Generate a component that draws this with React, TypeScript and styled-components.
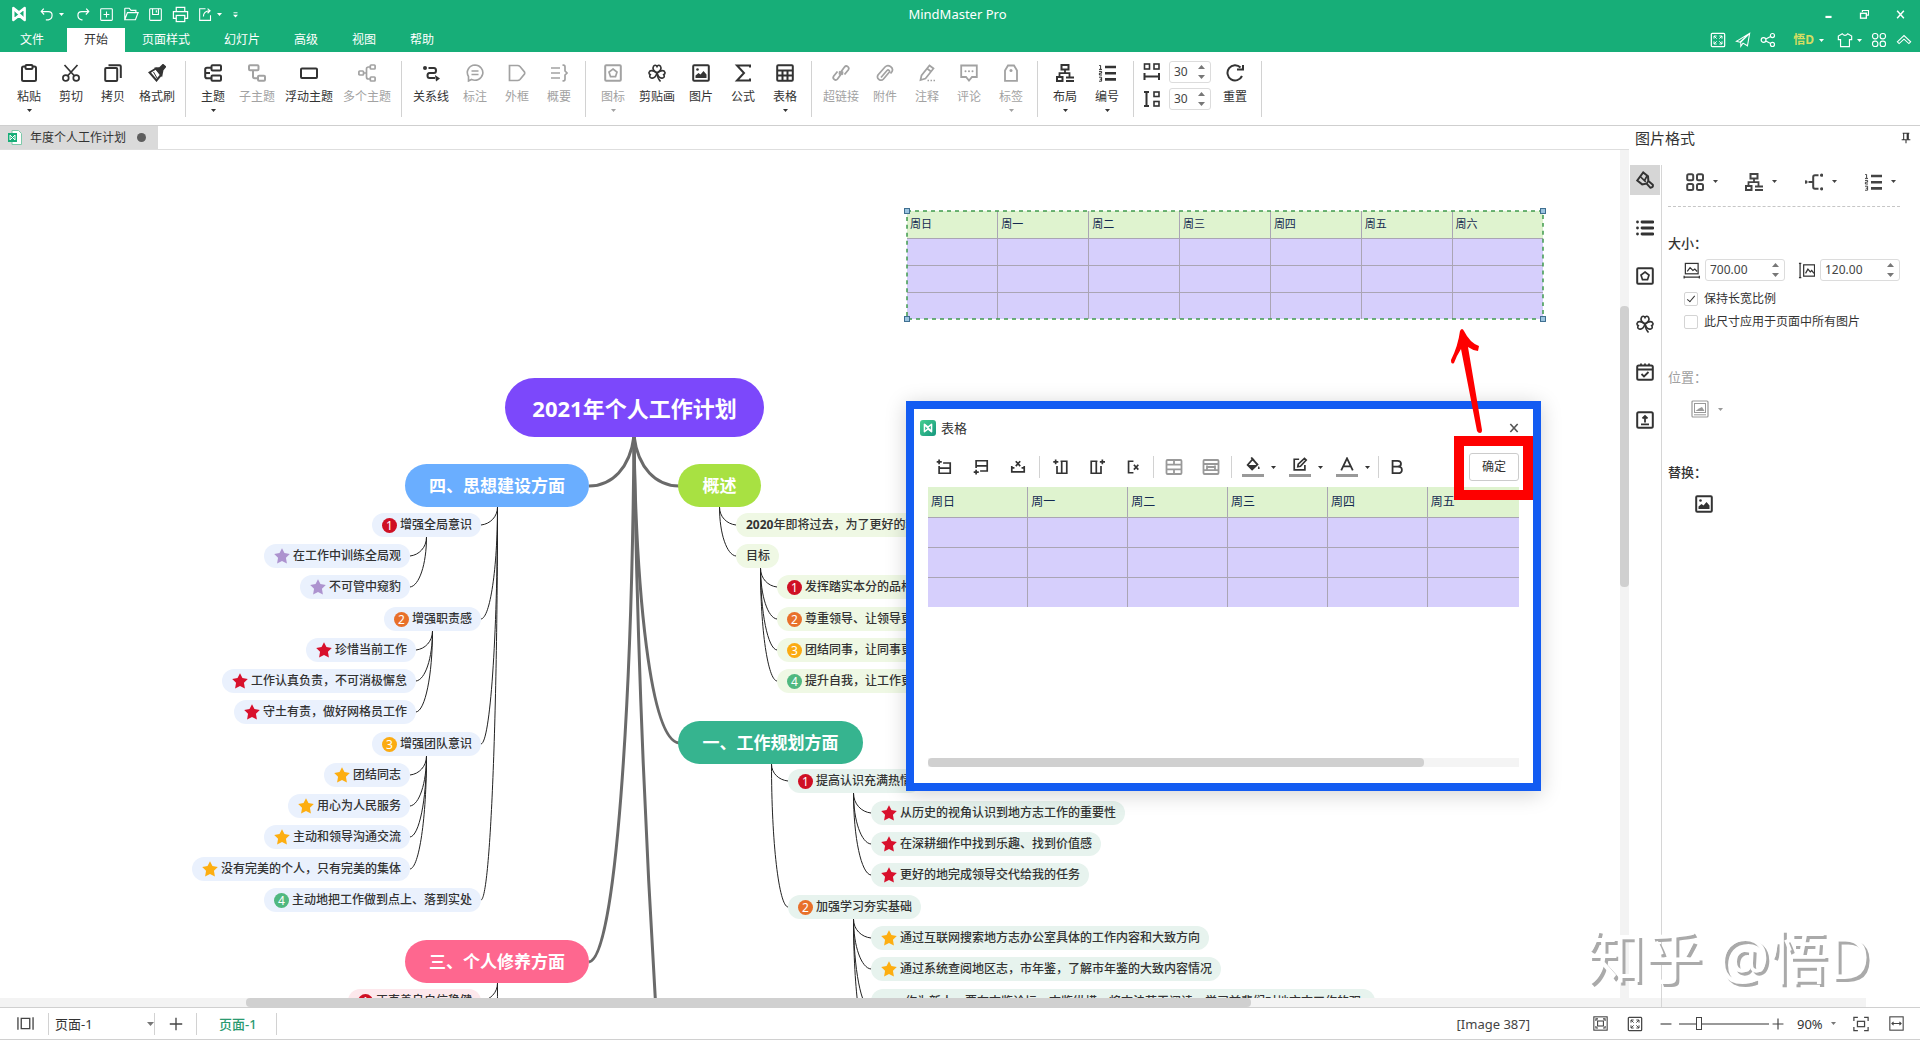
import React from "react";
import styled, { createGlobalStyle, css } from "styled-components";

/* ---------- icon drawings, 18 x 18 grid ---------- */

const dot = (x: number, y: number, r = 1.3) => <circle cx={x} cy={y} r={r} fill="currentColor" stroke="none" />;

const ICONS: Record<string, React.ReactNode> = {
  paste: <><rect x="2" y="2.5" width="14" height="14.5" rx="1.5" /><rect x="5.5" y="1" width="7" height="4" rx="1" fill="#fff" /></>,
  cut: <g strokeWidth="1.7"><circle cx="3.8" cy="14" r="2.9" /><circle cx="14.2" cy="14" r="2.9" /><path d="M2.5 1 12.5 12M15.5 1 5.5 12" /></g>,
  copy: <><rect x="1.2" y="4" width="12" height="13" rx="1" /><path d="M4.5 1.2H15.5Q16.8 1.2 16.8 2.5V14" /></>,
  brush: <><path d="M1.5 8.5 8 4.5 13 11 8.5 16.5Z" /><path d="M8 4.5 12 4 15 1 17 2.8 14.5 6 13.5 11Z" fill="currentColor" /><path d="M5.5 8 9 14" strokeWidth="1" /></>,
  theme: <><rect x="7.5" y="1.2" width="9.5" height="5.3" rx="1" /><rect x="7.5" y="11.5" width="9.5" height="5.3" rx="1" /><path d="M7.5 3.8H3Q1.2 3.8 1.2 5.6V12.4Q1.2 14.2 3 14.2H7.5M1.2 9H6" /></>,
  subtheme: <><rect x="1" y="1.2" width="9.5" height="5" rx="1" /><rect x="10" y="11.8" width="7" height="5" rx="1" /><path d="M5 6.2V12.5Q5 14.2 6.7 14.2H10" /></>,
  floating: <rect x="1" y="4.5" width="16" height="9.5" rx="1" />,
  multi: <g strokeWidth="1.7"><rect x="0.9" y="7" width="4.6" height="4" rx="0.8" /><rect x="12.3" y="1" width="4.8" height="4" rx="0.8" /><rect x="12.3" y="13" width="4.8" height="4" rx="0.8" /><path d="M12 3H10.5Q8.5 3 8.5 5V13Q8.5 15 10.5 15H12M5.5 9H8.5" /></g>,
  relation: <>{dot(3, 4, 2)}<path d="M6.5 4H12Q14 4 14 6.5T12 9H7.5Q5.5 9 5.5 11.5T7.5 14H13" /><path d="M13 11 18 14.5 14 17.5Z" fill="currentColor" stroke="none" /></>,
  callout: <g strokeWidth="1.6"><path d="M9 1A8 7.6 0 1 1 5.5 15.5L2.5 17V12.5A8 7.6 0 0 1 9 1Z" /><path d="M5.5 7H12.5M5.5 10.5H12.5" /></g>,
  frame: <path d="M1.5 1.5H9.5Q11 1.5 12 2.5L16.5 8Q17 9 16.5 10L12 15.5Q11 16.5 9.5 16.5H1.5Z" strokeWidth="1.7" />,
  summary: <g strokeWidth="1.7"><path d="M1 4H10M1 9H10M1 14H10M12.5 1.2H13.5Q15 1.2 15 3V7L17 9 15 11V15Q15 16.8 13.5 16.8H12.5" /></g>,
  picon: <><rect x="1.2" y="1.2" width="15.6" height="15.6" rx="1" /><path d="M9 5 13 8 11.5 12.7H6.5L5 8Z" strokeWidth="1.7" /></>,
  clover: <g strokeWidth="1.6"><path d="M9 9Q3.5 5.5 5.5 2.3 7.5 0 9 2.6 10.5 0 12.5 2.3 14.5 5.5 9 9Z" /><path d="M9 9Q2.5 4.5 1 8.5 0.8 10 2.3 10.6 0.8 13 3.3 14 7 15 9 9Z" /><path d="M9 9Q15.5 4.5 17 8.5 17.2 10 15.7 10.6 17.2 13 14.7 14 11 15 9 9Z" /><path d="M9 9Q9.5 14.5 12.5 17.5" /></g>,
  image: <><rect x="1.2" y="1.2" width="15.6" height="15.6" rx="1" />{dot(5.5, 5.5)}<path d="M3.5 14V11.5L6.5 9 8.5 10.5 11.5 7 14.5 10.5V14Z" fill="currentColor" stroke="none" /></>,
  sigma: <path d="M16 3.5V1.5H3L10 9 3 16.5H16V14.5" />,
  table: <><rect x="1.2" y="1.2" width="15.6" height="15.6" rx="1" /><path d="M1.2 6.5H16.8M1.2 11.5H16.8M6.5 6.5V16.8M11.5 6.5V16.8" /></>,
  link: <g strokeWidth="1.8"><path d="M7 10.5 12.5 3Q14 1.2 15.8 2.6T16.2 6L12.5 10.5" /><path d="M11 7.5 5.5 15Q4 16.8 2.2 15.4T1.8 12L5.5 7.5" /><path d="M7 7.5 11 10.5" /></g>,
  clip: <path d="M5 13.5 11 6.5Q12 5.5 13 6.3T13.2 8.2L7.5 15Q5.5 17.2 3 15.5T2 11L9 3Q11.5 0.5 14.5 2.5T16 7.5L14.5 9.5" strokeWidth="1.7" />,
  note: <g strokeWidth="1.7"><path d="M2.5 16 3.5 11.5 11.5 1.5 15.5 4.5 7.5 14.5Z" /><path d="M9 4.5 13 7.5" /><path d="M9.5 16.5H11M12.5 16.5H14M15.5 16.5H17" /></g>,
  comment: <><path d="M1.2 1.5H16.8V13H12L9 16.5 6 13H1.2Z" strokeWidth="1.8" />{dot(5.5, 7.3, 1)}{dot(9, 7.3, 1)}{dot(12.5, 7.3, 1)}</>,
  tag: <><path d="M3 16.8V6.5L6 1.5H12L15 6.5V16.8Z" strokeWidth="1.8" />{dot(9, 6.5, 1.5)}</>,
  layout: <><rect x="5.5" y="1" width="7" height="4.5" /><rect x="1" y="13" width="5.5" height="4" /><path d="M9 5.5V9M3.5 13V9.2H13.5V12.5M10 13.5H18M10 17H18" strokeWidth="1.8" /></>,
  numbering: <><path d="M1.2 1.5H2.6V5M1 5.4H4M1 7.4H3.6V9.2H1.4V11H4M1 13.2H3.6V17.2H1M1.8 15.2H3.6" strokeWidth="1" /><path d="M7 3H18M7 9.2H18M7 15.4H18" strokeWidth="2.6" /></>,
  hgap: <g strokeWidth="1.6"><rect x="1.5" y="1" width="5" height="5" /><rect x="11" y="1" width="5" height="5" /><path d="M1.5 10V17M16 10V17M1.5 13.5H16" strokeWidth="2" /></g>,
  vgap: <g strokeWidth="1.6"><path d="M1 2H6M1 16H6M3.5 2V16" strokeWidth="2" /><rect x="11" y="2" width="5" height="4.5" /><rect x="11" y="11.5" width="5" height="4.5" /></g>,
  reset: <><path d="M14.5 3.5A7.6 7.6 0 1 0 16 12" /><path d="M11 5.5H17V1" /></>,

  undo: <path d="M4.5 2 1.5 5.5 5 9M1.5 5.5H10Q14.5 5.5 14.5 10T10 15.5H7" strokeWidth="1.4" />,
  redo: <path d="M13.5 2 16.5 5.5 13 9M16.5 5.5H8Q3.5 5.5 3.5 10T8 15.5H9" strokeWidth="1.4" />,
  plusbox: <g strokeWidth="1.3"><rect x="2" y="2" width="14" height="14" rx="1" /><path d="M9 5.5V12.5M5.5 9H12.5" /></g>,
  open: <path d="M2 15.5V3Q2 2.5 2.5 2.5H7L9 5H14.5V7.5M2 15.5 5 7.5H17L14 15.5Z" strokeWidth="1.3" />,
  save: <g strokeWidth="1.3"><rect x="2" y="2" width="14" height="14" rx="1" /><path d="M5.5 2V9H12.5V2M10 4V6.5" /></g>,
  print: <g strokeWidth="1.3"><path d="M4.5 6V1.5H13.5V6M4.5 13H1.5V6H16.5V13H13.5" /><rect x="4.5" y="10" width="9" height="6.5" /></g>,
  share: <g strokeWidth="1.3"><path d="M9 2H2V16H15V10" /><path d="M6.5 11.5Q6.5 5 14 4.5M11.5 2 14.5 4.5 11.5 7.5" /></g>,
  more: <><path d="M5 5.5H13" strokeWidth="1.8" /><path d="M4 9.5H14L9 15Z" fill="currentColor" stroke="none" /></>,
  full: <g strokeWidth="1.4"><rect x="1.5" y="1.5" width="15" height="15" rx="1" /><path d="M4.5 7.5V4.5H7.5M4.5 4.5 7.5 7.5M10.5 4.5H13.5V7.5M13.5 4.5 10.5 7.5M4.5 10.5V13.5H7.5M4.5 13.5 7.5 10.5M13.5 10.5V13.5H10.5M13.5 13.5 10.5 10.5" strokeWidth="1.1" /></g>,
  plane: <path d="M1.5 10.5 16.5 1.5 14 15.5 9 12.5 6.5 16V11.5L16.5 1.5 5.5 11.5Z" strokeWidth="1.2" />,
  nodes: <g strokeWidth="1.3"><circle cx="4" cy="9" r="2.7" /><circle cx="14" cy="4" r="2.3" /><circle cx="14" cy="14" r="2.3" /><path d="M6.5 8 12 5M6.5 10 12 13" /></g>,
  shirt: <path d="M6 2 1.5 4.5V8.5H4V16.5H14V8.5H16.5V4.5L12 2Q9 5.5 6 2Z" strokeWidth="1.3" />,
  apps: <g strokeWidth="1.3"><rect x="1.7" y="1.7" width="6" height="6" rx="2.6" /><rect x="10.3" y="1.7" width="6" height="6" rx="2.6" /><rect x="1.7" y="10.3" width="6" height="6" rx="2.6" /><rect x="10.3" y="10.3" width="6" height="6" rx="2.6" /></g>,
  chevrons: <path d="M1.5 11 9 4 16.5 11 14.5 13 9 8 3.5 13Z" strokeWidth="1.2" />,
  minimise: <path d="M4 13H14" strokeWidth="3.6" />,
  restore: <><path d="M5.5 5V2.5H15.5V10H13" strokeWidth="1.8" /><rect x="2.5" y="7" width="9.5" height="8" strokeWidth="2.2" /></>,
  close: <path d="M3.5 3 14.5 15M14.5 3 3.5 15" strokeWidth="2.4" />,

  format: <><path d="M1.2 9.5 7.2 1.5 12 5.2 12.4 10 16.8 13.8Q17.4 16.6 14.4 16.8L10.6 12.6 6.2 13.4Z" /><path d="M4.2 5.5 9.8 10.8M12.4 10 10.6 12.6M8.5 9.5 11 5" strokeWidth="1.6" /></>,
  list: <>{dot(1.5, 3, 1.4)}{dot(1.5, 9, 1.4)}{dot(1.5, 15, 1.4)}<path d="M6 3H17M6 9H17M6 15H17" strokeWidth="2.8" strokeLinecap="round" /></>,
  calendar: <><rect x="1.2" y="2.5" width="15.6" height="14.3" rx="1.5" /><path d="M1.2 6.5H16.8M5 0.5V3M9 0.5V3M13 0.5V3M5.500 11 8 13.5 12.5 9" strokeWidth="1.8" /></>,
  upload: <><rect x="1.2" y="1.2" width="15.6" height="15.6" rx="1.5" /><path d="M5 13.3H13M9 11.5V6M6.5 7.5 9 5 11.5 7.5" strokeWidth="1.8" /></>,
  squares: <><rect x="1.2" y="1.2" width="6" height="6" rx="1.5" /><rect x="11" y="1.2" width="6" height="6" rx="1.5" /><rect x="1.2" y="11" width="6" height="6" rx="1.5" /><rect x="11" y="11" width="6" height="6" rx="1.5" /></>,
  branch: <>{dot(0.9, 9, 1.7)}{dot(16.6, 2.2, 1.6)}{dot(16.6, 15.8, 1.6)}<path d="M3.5 9H8M13.5 2.2H10Q8.2 2.2 8.2 4V14Q8.2 15.8 10 15.8H13.5" /></>,
  pin: <><path d="M4 2H14M5.5 2V11M12 2V11M2.5 11.5H15.5M9 12V17" strokeWidth="1.6" /><path d="M10 2H13V11H10Z" fill="currentColor" stroke="none" /></>,
  imgWidth: <g strokeWidth="1.3"><rect x="2.5" y="1.5" width="13.5" height="11" /><path d="M4.5 10 7.5 6 10.5 9 12.500 7.5 15 10M1 16H17.5M1.2 14.5V17.5M17.3 14.5V17.5" /></g>,
  imgHeight: <g strokeWidth="1.3"><rect x="6" y="3" width="11.5" height="12" /><path d="M8 12 10.5 7.5 13 10.5 14.5 9 17 12M2.2 1.5V16.5M1 1.5H3.5M1 16.5H3.5" /></g>,
  imgFrame: <><rect x="1" y="1" width="16" height="16" rx="1" strokeWidth="1.2" /><rect x="3.5" y="3.5" width="11" height="9" strokeWidth="1" /><path d="M4.5 11 8 8.5 11 7 13.5 11Z" fill="currentColor" stroke="none" /><path d="M3 14.8H15" strokeWidth="1" /></>,

  rowAbove: <path d="M3.5 0.5V6M0.8 3.2H6.5M8 4.5H16V16H3.5V8M3.5 10.2H16" strokeWidth="1.9" />,
  rowBelow: <path d="M3.5 12V17.5M0.8 14.8H6.5M8 13.5H16V2H3.5V10M3.5 7.8H16" strokeWidth="1.9" />,
  rowDelete: <path d="M2 8V14.5H16V8M6.5 2.5 11.5 8M11.5 2.5 6.5 8M5 10H2M13 10H16" strokeWidth="1.9" />,
  colLeft: <path d="M3 0.5V6M0.3 3.2H6M4.5 8V16H15.5V2.5H8.5M9.8 2.5V16" strokeWidth="1.9" />,
  colRight: <path d="M15 0.5V6M12.2 3.2H18M13.5 8V16H2.5V2.5H9.5M8.2 2.5V16" strokeWidth="1.9" />,
  colDelete: <path d="M9.5 2.5H4V15.5H9.5M10 6.5 15 12M15 6.5 10 12" strokeWidth="1.9" />,
  merge: <g strokeWidth="1.8"><rect x="1.5" y="2" width="15" height="14" rx="1" /><path d="M1.5 6.7H16.5M1.5 11.3H16.5M9 2V6.7M9 11.3V16" /></g>,
  split: <g strokeWidth="1.8"><rect x="1.5" y="2" width="15" height="14" rx="1" /><path d="M1.5 6H16.500M5 7.500V12M13 7.5V12M1.5 12.2H16.5M5 9H13" /></g>,
  fill: <><path d="M8.500 2.5 14 8.5 8 14 3 9Z" /><path d="M3.5 9H13.5L8 14Z" fill="currentColor" stroke="none" /><path d="M7 0.5 10 4" /><path d="M15.5 10Q17.5 13.5 15.5 13.5T15.5 10Z" fill="currentColor" stroke="none" /></>,
  pen: <path d="M8 2.5H2.5V14.5H14.5V9M6.5 11 7 8 14 1.5 16 3.5 9.5 10.5Z" strokeWidth="1.9" />,
  letterA: <path d="M2.5 15 9 1.5 15.5 15M5 10.5H13" />,
  letterB: <path d="M4 2H9.5Q13.5 2 13.5 5.3T9.5 8.7H4ZM4 8.7H10Q14.5 8.7 14.5 12.3T10 16H4Z" />,

  panels: <path d="M1 2.5V15.5M17 2.5V15.5M4.5 3.5H13.5V14.5H4.5Z" strokeWidth="1.4" />,
  plus: <path d="M9 2V16M2 9H16" strokeWidth="1.5" />,
  minus: <path d="M2 9H16" strokeWidth="1.5" />,
  fit: <g strokeWidth="1.3"><rect x="1" y="1" width="16" height="16" /><rect x="5.5" y="6" width="7" height="6" /><path d="M3.5 6V3.5H6M12 3.5H14.5V6M3.5 12V14.5H6M12 14.5H14.5V12" /></g>,
  focus: <g strokeWidth="1.4"><rect x="5" y="6" width="8" height="6" /><path d="M1 5.5V1.5H5.5M12.5 1.5H17V5.5M1 12.5V16.5H5.5M12.5 16.5H17V12.5" /></g>,
  fitWidth: <g strokeWidth="1.3"><rect x="1" y="1" width="16" height="16" /><path d="M4 9H14M5.5 7 3.5 9 5.5 11M12.5 7 14.5 9 12.5 11" /></g>,
};

const Svg = styled.svg`
  display: block;
  flex: none;
`;

function Icon({ name, size = 18 }: { name: string; size?: number }) {
  return (
    <Svg width={size} height={size} viewBox="0 0 18 18" fill="none" stroke="currentColor" strokeWidth="2" aria-hidden="true">
      {ICONS[name]}
    </Svg>
  );
}

function Caret({ up = false, large = false }: { up?: boolean; large?: boolean }) {
  return (
    <Svg width={large ? 7 : 5} height={large ? 4 : 3} viewBox="0 0 7 4" preserveAspectRatio="none" aria-hidden="true">
      <path d={up ? "M0 4H7L3.5 0Z" : "M0 0H7L3.5 4Z"} fill="currentColor" />
    </Svg>
  );
}

function Logo({ size = 16 }: { size?: number }) {
  return (
    <Svg width={size} height={size} viewBox="0 0 16 16" aria-hidden="true">
      <path d="M2.3 2V14L8 9.5 13.7 14V2L8 6.5Z" fill="none" stroke="currentColor" strokeWidth="2.4" strokeLinejoin="round" />
      <path d="M2.5 3 13.5 13" stroke="currentColor" strokeWidth="2.2" />
    </Svg>
  );
}

/* ---------- base ---------- */

const Global = createGlobalStyle`
  *, *::before, *::after { box-sizing: border-box; }
  body { margin: 0; }
  body, button, input, select {
    font-family: "Noto Sans", "Noto Sans CJK SC", sans-serif;
    font-size: 12px;
    line-height: 16px;
    color: #333;
  }
`;

const Page = styled.div`
  position: relative;
  display: flex;
  flex-direction: column;
  height: 100vh;
  background: #fff;
  overflow: hidden;
`;

const plain = css`
  display: flex;
  align-items: center;
  padding: 0;
  border: 0;
  background: none;
`;

const IconButton = styled.button<{ $w?: number; $gap?: number; $muted?: boolean }>`
  ${plain}
  flex: none;
  justify-content: center;
  gap: ${(p) => p.$gap ?? 4}px;
  width: ${(p) => (p.$w ? `${p.$w}px` : "auto")};
  color: ${(p) => (p.$muted ? "#999" : "inherit")};
`;

const Cluster = styled.div<{ $gap?: number }>`
  display: flex;
  align-items: center;
  gap: ${(p) => p.$gap ?? 0}px;
`;

const Divider = styled.span<{ $m?: number }>`
  flex: none;
  width: 1px;
  height: 22px;
  margin: 0 ${(p) => p.$m ?? 0}px;
  background: #d2d2d2;
`;

/* ---------- header ---------- */

const Header = styled.header`
  flex: none;
  color: #fff;
  background: #17ae78;
`;

const TitleBar = styled.div`
  display: grid;
  grid-template-columns: 1fr auto 1fr;
  align-items: center;
  height: 28px;
  padding: 0 14px 0 9px;
`;

const QuickBar = styled.div`
  display: flex;
  align-items: center;
  gap: 9px;
`;

const AppTitle = styled.h1`
  margin: 0;
  font-size: 13px;
  line-height: 16px;
  font-weight: 400;
`;

const WindowControls = styled.div`
  display: flex;
  justify-content: flex-end;
  gap: 25px;
  height: 18px;
`;

const MenuRow = styled.div`
  display: flex;
  justify-content: space-between;
  height: 24px;
  padding: 0 8px 0 3px;
`;

const Menu = styled.nav`
  display: flex;
`;

const MenuTab = styled.button<{ $active?: boolean; $file?: boolean }>`
  ${plain}
  padding: 0 17px;
  margin-right: ${(p) => (p.$file ? "6px" : "0")};
  color: ${(p) => (p.$active ? "#333" : "#fff")};
  background: ${(p) => (p.$active ? "#fff" : "none")};
`;

const HeaderTools = styled.div`
  display: flex;
  align-items: center;
  gap: 9px;
`;

const User = styled.button`
  ${plain}
  gap: 5px;
  margin: 0 4px 0 8px;
  color: #fff;
`;

const UserName = styled.span`
  font-weight: 700;
  color: #d6dd62;
`;

/* ---------- ribbon ---------- */

const Ribbon = styled.section`
  flex: none;
  display: flex;
  height: 74px;
  padding: 9px 2px 8px;
  border-bottom: 1px solid #cfcfcf;
`;

const Group = styled.div`
  display: flex;
  padding: 0 5px 0 6px;
  border-right: 1px solid #d2d2d2;
`;

const Tool = styled.button<{ $chars: number; $off?: boolean }>`
  ${plain}
  flex-direction: column;
  width: ${(p) => (p.$chars === 4 ? 58 : p.$chars === 3 ? 46 : 42)}px;
  padding-top: 3px;
  white-space: nowrap;
  color: ${(p) => (p.$off ? "#a2a2a2" : "#333")};
`;

const ToolLabel = styled.span`
  margin: 7px 0 4px;
`;

const Spacing = styled.div`
  display: flex;
  flex-direction: column;
  gap: 5px;
  padding: 0 3px;
`;

const Field = styled.div`
  display: flex;
  align-items: center;
  gap: 8px;
`;

const Spinner = styled.span<{ $w: number }>`
  display: flex;
  align-items: center;
  width: ${(p) => p.$w}px;
  height: 22px;
  padding: 0 5px 0 4px;
  border: 1px solid #dcdcdc;
  border-radius: 3px;
`;

const SpinnerInput = styled.input`
  flex: 1;
  min-width: 0;
  width: 0;
  padding: 0;
  border: 0;
  outline: 0;
  background: none;
  color: #444;
`;

const Steps = styled.span`
  display: flex;
  flex-direction: column;
  gap: 6px;
  color: #777;
`;

const Step = styled.button`
  ${plain}
  color: inherit;
`;

function NumberBox({ value, w, label }: { value: string; w: number; label: string }) {
  return (
    <Spinner $w={w}>
      <SpinnerInput type="text" defaultValue={value} aria-label={label} />
      <Steps>
        <Step type="button" aria-label={`${label} +`}><Caret up large /></Step>
        <Step type="button" aria-label={`${label} -`}><Caret large /></Step>
      </Steps>
    </Spinner>
  );
}

type ToolDef = { icon: string; label: string; off?: boolean; menu?: boolean };

const RIBBON: ToolDef[][] = [
  [
    { icon: "paste", label: "粘贴", menu: true },
    { icon: "cut", label: "剪切" },
    { icon: "copy", label: "拷贝" },
    { icon: "brush", label: "格式刷" },
  ],
  [
    { icon: "theme", label: "主题", menu: true },
    { icon: "subtheme", label: "子主题", off: true },
    { icon: "floating", label: "浮动主题" },
    { icon: "multi", label: "多个主题", off: true },
  ],
  [
    { icon: "relation", label: "关系线" },
    { icon: "callout", label: "标注", off: true },
    { icon: "frame", label: "外框", off: true },
    { icon: "summary", label: "概要", off: true },
  ],
  [
    { icon: "picon", label: "图标", off: true, menu: true },
    { icon: "clover", label: "剪贴画" },
    { icon: "image", label: "图片" },
    { icon: "sigma", label: "公式" },
    { icon: "table", label: "表格", menu: true },
  ],
  [
    { icon: "link", label: "超链接", off: true },
    { icon: "clip", label: "附件", off: true },
    { icon: "note", label: "注释", off: true },
    { icon: "comment", label: "评论", off: true },
    { icon: "tag", label: "标签", off: true, menu: true },
  ],
  [
    { icon: "layout", label: "布局", menu: true },
    { icon: "numbering", label: "编号", menu: true },
  ],
];

function ToolButton({ icon, label, off, menu }: ToolDef) {
  return (
    <Tool type="button" $chars={label.length} $off={off}>
      <Icon name={icon} />
      <ToolLabel>{label}</ToolLabel>
      {menu && <Caret />}
    </Tool>
  );
}

/* ---------- workspace ---------- */

const Main = styled.main`
  flex: 1;
  min-height: 0;
  display: grid;
  grid-template-columns: minmax(0, 1fr) 291px;
`;

const Workspace = styled.section`
  display: grid;
  grid-template: 24px minmax(0, 1fr) 9px / minmax(0, 1fr) 9px;
`;

const DocTabs = styled.div`
  grid-column: 1 / -1;
  display: flex;
  border-bottom: 1px solid #dedede;
`;

const DocTab = styled.button`
  ${plain}
  gap: 8px;
  padding: 0 12px 0 8px;
  background: #dadada;
`;

const Modified = styled.span`
  width: 9px;
  height: 9px;
  margin-left: 3px;
  border-radius: 50%;
  background: #5e5e5e;
`;

const Canvas = styled.div`
  position: relative;
  overflow: hidden;
`;

const Track = styled.div<{ $vertical?: boolean }>`
  background: #f3f3f3;
  padding: ${(p) => (p.$vertical ? "156px 0 0" : "0 0 0 246px")};
`;

const Thumb = styled.div<{ $w?: number; $h?: number }>`
  width: ${(p) => (p.$w ? `${p.$w}px` : "100%")};
  height: ${(p) => (p.$h ? `${p.$h}px` : "9px")};
  border-radius: 4px;
  background: #d0d0d0;
`;

const Wires = styled.svg`
  position: absolute;
  inset: 0;
  width: 100%;
  height: 100%;
  fill: none;
  pointer-events: none;
`;

const Topic = styled.div<{ $x: number; $y: number; $w: number; $bg: string; $root?: boolean }>`
  position: absolute;
  left: ${(p) => p.$x}px;
  top: ${(p) => p.$y}px;
  display: flex;
  align-items: center;
  justify-content: center;
  width: ${(p) => p.$w}px;
  height: ${(p) => (p.$root ? 59 : 43)}px;
  border-radius: 30px;
  font-size: ${(p) => (p.$root ? 22 : 17)}px;
  line-height: 24px;
  font-weight: 700;
  white-space: nowrap;
  color: #fff;
  background: ${(p) => p.$bg};
`;

const Node = styled.div<{ $x: number; $y: number; $bg: string; $side: "left" | "right"; $tall?: boolean }>`
  position: absolute;
  ${(p) => (p.$side === "left" ? `right: calc(100% - ${p.$x}px);` : `left: ${p.$x}px;`)}
  top: ${(p) => p.$y - 12}px;
  display: flex;
  align-items: ${(p) => (p.$tall ? "flex-start" : "center")};
  gap: 3px;
  height: ${(p) => (p.$tall ? 40 : 24)}px;
  padding: ${(p) => (p.$tall ? "5px 14px 5px 34px" : "0 9px 0 10px")};
  border-radius: 12px;
  font-weight: 500;
  white-space: nowrap;
  background: ${(p) => p.$bg};
`;

const Badge = styled.span<{ $bg: string }>`
  flex: none;
  width: 15px;
  height: 15px;
  border-radius: 50%;
  font-size: 12px;
  line-height: 15px;
  font-weight: 400;
  text-align: center;
  color: #fff;
  background: ${(p) => p.$bg};
`;

const MARKS: Record<string, string> = {
  "1": "#cf1024",
  "2": "#e8702a",
  "3": "#fbab12",
  "4": "#50b880",
  red: "#d8102c",
  gold: "#fdae11",
  violet: "#ad93cf",
};

function Mark({ kind }: { kind: string }) {
  if (/\d/.test(kind)) return <Badge $bg={MARKS[kind]}>{kind}</Badge>;
  return (
    <Svg width="16" height="16" viewBox="0 0 15 15" aria-hidden="true">
      <path d="M7.5 0.3 9.8 4.8 14.8 5.6 11.2 9.2 12.1 14.5 7.5 12.1 2.9 14.5 3.8 9.2 0.2 5.6 5.2 4.8Z" fill={MARKS[kind]} />
    </Svg>
  );
}

const BLUE = "#eaf1fd";
const LIME = "#eff8e4";
const TEAL = "#e7f3ee";
const PINK = "#fde8ec";

type NodeDef = {
  x: number;
  y: number;
  text: string;
  strong?: string;
  mark?: string;
  bg: string;
  side: "left" | "right";
  tall?: boolean;
};

const left = (x: number, y: number, mark: string, text: string, bg = BLUE): NodeDef => ({ x, y, mark, text, bg, side: "left" });
const right = (x: number, y: number, mark: string | undefined, text: string, bg: string): NodeDef => ({ x, y, mark, text, bg, side: "right" });

const NODES: NodeDef[] = [
  left(481, 375, "1", "增强全局意识"),
  left(410, 406, "violet", "在工作中训练全局观"),
  left(410, 437, "violet", "不可管中窥豹"),
  left(481, 469, "2", "增强职责感"),
  left(416, 500, "red", "珍惜当前工作"),
  left(416, 531, "red", "工作认真负责，不可消极懈怠"),
  left(416, 562, "red", "守土有责，做好网格员工作"),
  left(481, 594, "3", "增强团队意识"),
  left(410, 625, "gold", "团结同志"),
  left(410, 656, "gold", "用心为人民服务"),
  left(410, 687, "gold", "主动和领导沟通交流"),
  left(410, 719, "gold", "没有完美的个人，只有完美的集体"),
  left(481, 750, "4", "主动地把工作做到点上、落到实处"),
  left(481, 851, "1", "正直善良自信稳健", PINK),
  { ...right(736, 375, undefined, "年即将过去，为了更好的利", LIME), strong: "2020" },
  right(736, 406, undefined, "目标", LIME),
  right(777, 437, "1", "发挥踏实本分的品格", LIME),
  right(777, 469, "2", "尊重领导、让领导更", LIME),
  right(777, 500, "3", "团结同事，让同事更", LIME),
  right(777, 531, "4", "提升自我，让工作更", LIME),
  right(788, 631, "1", "提高认识充满热情", TEAL),
  right(871, 663, "red", "从历史的视角认识到地方志工作的重要性", TEAL),
  right(871, 694, "red", "在深耕细作中找到乐趣、找到价值感", TEAL),
  right(871, 725, "red", "更好的地完成领导交代给我的任务", TEAL),
  right(788, 757, "2", "加强学习夯实基础", TEAL),
  right(871, 788, "gold", "通过互联网搜索地方志办公室具体的工作内容和大致方向", TEAL),
  right(871, 819, "gold", "通过系统查阅地区志，市年鉴，了解市年鉴的大致内容情况", TEAL),
  { ...right(871, 851, undefined, "作为新人，要在志鉴论坛、志鉴纵横、将志法若干阅读，学习前辈们对地方志工作的观", TEAL), tall: true },
];

/* Each fan: parent anchor, x of the children, and their y positions. */
const FANS: [number, number, number, number[]][] = [
  [497, 357, 481, [375, 469, 594, 750]],
  [426, 387, 410, [406, 437]],
  [432, 481, 416, [500, 531, 562]],
  [426, 606, 410, [625, 656, 687, 719]],
  [497, 833, 481, [851, 1100]],
  [719, 357, 736, [375, 406]],
  [760, 418, 777, [437, 469, 500, 531]],
  [771, 614, 788, [631, 757]],
  [853, 643, 871, [663, 694, 725]],
  [853, 769, 871, [788, 819, 860, 900]],
];

const bend = (px: number, py: number, cx: number, cy: number) =>
  `M${px} ${py}C${px} ${py + (cy - py) * 0.55} ${cx + (px - cx) * 0.55} ${cy - 1} ${cx} ${cy}`;

/* ---------- week table ---------- */

const DAYS = ["周日", "周一", "周二", "周三", "周四", "周五", "周六"];

const Week = styled.table<{ $width: number; $row: number; $size: number }>`
  table-layout: fixed;
  width: ${(p) => p.$width}px;
  border-collapse: collapse;
  border-style: hidden;
  th, td {
    height: ${(p) => p.$row}px;
    padding: 0 3px;
    border: 1px solid #aaa5b4;
    background: #d6cffc;
  }
  th {
    font-size: ${(p) => p.$size}px;
    font-weight: 400;
    text-align: left;
    color: #14294f;
    background: #dff3cf;
  }
`;

function WeekTable(props: { width: number; row: number; size: number }) {
  return (
    <Week $width={props.width} $row={props.row} $size={props.size}>
      <thead>
        <tr>{DAYS.map((d) => <th key={d} scope="col">{d}</th>)}</tr>
      </thead>
      <tbody>
        {[0, 1, 2].map((r) => (
          <tr key={r}>{DAYS.map((d) => <td key={d} />)}</tr>
        ))}
      </tbody>
    </Week>
  );
}

const Picture = styled.div`
  position: absolute;
  left: 907px;
  top: 61px;
`;

const Selection = styled.svg`
  position: absolute;
  inset: 0;
  width: 100%;
  height: 100%;
  overflow: visible;
  fill: none;
`;

/* ---------- dialog ---------- */

const Dialog = styled.section`
  position: absolute;
  left: 906px;
  top: 251px;
  display: flex;
  flex-direction: column;
  width: 635px;
  height: 390px;
  padding: 7px 14px 16px;
  border: 8px solid #135cf2;
  background: #fff;
  box-shadow: 0 3px 20px rgba(0, 0, 0, 0.18);
`;

const DialogHead = styled.div`
  display: flex;
  align-items: center;
  justify-content: space-between;
  height: 24px;
  margin: 0 -3px 0 -8px;
  color: #555;
`;

const DialogTitle = styled.h2`
  display: flex;
  align-items: center;
  gap: 5px;
  margin: 0;
  font-size: 13px;
  line-height: 16px;
  font-weight: 400;
  color: #333;
`;

const AppBadge = styled.span`
  display: flex;
  padding: 3px;
  border-radius: 3px;
  color: #fff;
  background: linear-gradient(135deg, #45cf90, #16977f);
`;

const DialogTools = styled.div`
  display: flex;
  align-items: center;
  justify-content: space-between;
  height: 47px;
  padding: 7px 0 0 6px;
`;

const Swatch = styled.span`
  display: flex;
  flex-direction: column;
  align-items: center;
  gap: 1px;
  width: 22px;
  &::after {
    content: "";
    width: 100%;
    height: 3px;
    background: #999;
  }
`;

const Confirm = styled.button`
  width: 50px;
  height: 28px;
  padding: 0;
  border: 1px solid #ccc;
  border-radius: 3px;
  background: #fff;
`;

const SheetArea = styled.div`
  flex: 1;
  overflow: hidden;
`;

const SheetTrack = styled.div`
  height: 9px;
  background: #f4f4f4;
`;

const Highlight = styled.div`
  position: absolute;
  left: 1454px;
  top: 286px;
  width: 79px;
  height: 64px;
  border: 10px solid #fe0000;
`;

/* ---------- format panel ---------- */

const Panel = styled.aside`
  display: flex;
  flex-direction: column;
  min-height: 0;
`;

const PanelHead = styled.div`
  display: flex;
  align-items: center;
  justify-content: space-between;
  height: 24px;
  margin-bottom: 15px;
  padding: 0 8px 0 6px;
`;

const PanelTitle = styled.h2`
  margin: 0;
  font-size: 15px;
  line-height: 20px;
  font-weight: 400;
`;

const PanelBody = styled.div`
  flex: 1;
  display: grid;
  grid-template-columns: 33px 1fr;
`;

const SideTabs = styled.div`
  display: flex;
  flex-direction: column;
  gap: 18px;
  padding-left: 1px;
  border-right: 1px solid #d6d6d6;
`;

const SideTab = styled.button<{ $active?: boolean }>`
  ${plain}
  justify-content: center;
  width: 30px;
  height: 30px;
  background: ${(p) => (p.$active ? "#d6d6d6" : "none")};
`;

const Options = styled.div`
  padding: 0 20px 0 6px;
`;

const FormatRow = styled.div`
  display: flex;
  justify-content: space-between;
  height: 42px;
  padding: 8px 4px 16px 18px;
  border-bottom: 1px dashed #c6c6c6;
  color: #444;
`;

const Section = styled.section<{ $gap: number; $muted?: boolean }>`
  margin-top: ${(p) => p.$gap}px;
  color: ${(p) => (p.$muted ? "#a0a0a0" : "#333")};
`;

const SectionTitle = styled.h3<{ $muted?: boolean }>`
  margin: 0 0 7px;
  font-size: 13px;
  line-height: 18px;
  font-weight: ${(p) => (p.$muted ? 400 : 500)};
`;

const SizeRow = styled.div`
  display: flex;
  justify-content: space-between;
  padding-left: 15px;
  margin-bottom: 10px;
`;

const CheckLabel = styled.label`
  display: flex;
  align-items: center;
  gap: 6px;
  margin: 0 0 7px 16px;
`;

const Check = styled.input`
  appearance: none;
  display: grid;
  place-items: start center;
  width: 14px;
  height: 14px;
  margin: 0;
  border: 1px solid #d4d4d4;
  border-radius: 2px;
  &:checked::after {
    content: "";
    width: 4px;
    height: 8px;
    margin-top: 1px;
    border: solid #333;
    border-width: 0 1px 1px 0;
    transform: rotate(40deg);
  }
`;

const Indent = styled.div<{ $x: number }>`
  padding: 7px 0 0 ${(p) => p.$x}px;
`;

/* ---------- status bar ---------- */

const StatusBar = styled.footer`
  flex: none;
  display: flex;
  align-items: center;
  justify-content: space-between;
  height: 33px;
  padding: 0 14px 0 8px;
  border-top: 1px solid #d0d0d0;
  border-bottom: 1px solid #d0d0d0;
  color: #444;
`;

const Picker = styled.label<{ $w: number; $pad?: number }>`
  display: flex;
  align-items: center;
  width: ${(p) => p.$w}px;
  padding-left: ${(p) => p.$pad ?? 0}px;
  color: #777;
`;

const PickerSelect = styled.select`
  appearance: none;
  flex: 1;
  min-width: 0;
  padding: 0;
  border: 0;
  outline: 0;
  font-size: 13px;
  background: none;
`;

const PageTab = styled.button`
  ${plain}
  padding: 0 19px 0 22px;
  font-size: 13px;
  font-weight: 500;
  color: #2b9a70;
`;

const Info = styled.span`
  margin-right: 60px;
  font-size: 13px;
`;

const ZoomGroup = styled.div`
  display: flex;
  align-items: center;
  margin: 0 10px 0 12px;
`;

const Zoom = styled.input`
  appearance: none;
  width: 90px;
  height: 14px;
  margin: 0 0 0 4px;
  background: linear-gradient(#999, #999) center / 100% 2px no-repeat;
  &::-webkit-slider-thumb {
    appearance: none;
    width: 6px;
    height: 13px;
    border: 1px solid #444;
    background: #fff;
  }
`;

const Watermark = styled.div`
  position: absolute;
  right: 50px;
  bottom: 51px;
  font-size: 58px;
  line-height: 64px;
  font-weight: 400;
  color: #fff;
  text-shadow: 3px 3px 0 #aaa;
  pointer-events: none;
`;

/* ---------- app ---------- */

export default function App() {
  return (
    <Page>
      <Global />
      <Header>
        <TitleBar>
          <QuickBar>
            <IconButton type="button" aria-label="MindMaster" $w={20}><Logo /></IconButton>
            <IconButton type="button" aria-label="撤销" $w={28}><Icon name="undo" size={15} /><Caret /></IconButton>
            <IconButton type="button" aria-label="重做"><Icon name="redo" size={15} /></IconButton>
            <IconButton type="button" aria-label="新建"><Icon name="plusbox" size={15} /></IconButton>
            <IconButton type="button" aria-label="打开"><Icon name="open" size={16} /></IconButton>
            <IconButton type="button" aria-label="保存"><Icon name="save" size={15} /></IconButton>
            <IconButton type="button" aria-label="打印"><Icon name="print" size={17} /></IconButton>
            <IconButton type="button" aria-label="导出"><Icon name="share" size={15} /><Caret /></IconButton>
            <IconButton type="button" aria-label="更多"><Icon name="more" size={9} /></IconButton>
          </QuickBar>
          <AppTitle>MindMaster Pro</AppTitle>
          <WindowControls>
            <IconButton type="button" aria-label="最小化"><Icon name="minimise" size={11} /></IconButton>
            <IconButton type="button" aria-label="还原"><Icon name="restore" size={11} /></IconButton>
            <IconButton type="button" aria-label="关闭"><Icon name="close" size={11} /></IconButton>
          </WindowControls>
        </TitleBar>
        <MenuRow>
          <Menu>
            {["文件", "开始", "页面样式", "幻灯片", "高级", "视图", "帮助"].map((t) => (
              <MenuTab key={t} type="button" $file={t === "文件"} $active={t === "开始"}>{t}</MenuTab>
            ))}
          </Menu>
          <HeaderTools>
            <IconButton type="button" aria-label="全屏"><Icon name="full" size={16} /></IconButton>
            <IconButton type="button" aria-label="发送"><Icon name="plane" size={16} /></IconButton>
            <IconButton type="button" aria-label="分享"><Icon name="nodes" size={16} /></IconButton>
            <User type="button"><UserName>悟D</UserName><Caret /></User>
            <IconButton type="button" aria-label="皮肤"><Icon name="shirt" size={16} /><Caret /></IconButton>
            <IconButton type="button" aria-label="应用"><Icon name="apps" size={16} /></IconButton>
            <IconButton type="button" aria-label="收起"><Icon name="chevrons" size={16} /></IconButton>
          </HeaderTools>
        </MenuRow>
      </Header>

      <Ribbon>
        {RIBBON.map((group, i) => (
          <Group key={i}>{group.map((t) => <ToolButton key={t.label} {...t} />)}</Group>
        ))}
        <Group>
          <Spacing>
            <Field><Icon name="hgap" /><NumberBox value="30" w={42} label="水平间距" /></Field>
            <Field><Icon name="vgap" /><NumberBox value="30" w={42} label="垂直间距" /></Field>
          </Spacing>
          <ToolButton icon="reset" label="重置" />
        </Group>
      </Ribbon>

      <Main>
        <Workspace>
          <DocTabs>
            <DocTab type="button">
              <Svg width="14" height="15" viewBox="0 0 14 15" aria-hidden="true">
                <path d="M4 0.5H10.5L13.5 3.5V14.5H4Z" fill="#fff" stroke="#7cc9a9" />
                <rect y="3" width="9" height="9" fill="#17ae78" />
                <path d="M2 10V5L7 10V5L2 10" fill="none" stroke="#fff" />
              </Svg>
              年度个人工作计划
              <Modified />
            </DocTab>
          </DocTabs>
          <Canvas>
            <Wires>
              <g stroke="#6a6a6a" strokeWidth="3">
                <path d="M634 286C630 318 612 336 589 336" />
                <path d="M634 286C638 318 656 336 679 336" />
                <path d="M634 286C636 440 650 590 679 593" />
                <path d="M634 286Q638 567 656 860" />
                <path d="M634 286C632 550 616 808 589 812" />
              </g>
              <g stroke="#222" strokeWidth="1">
                {FANS.map(([px, py, cx, ys]) => ys.map((y) => <path key={`${px}-${y}`} d={bend(px + 0.5, py, cx, y)} />))}
              </g>
            </Wires>
            <Topic $root $x={505} $y={228} $w={259} $bg="#7c48fb">2021年个人工作计划</Topic>
            <Topic $x={405} $y={314} $w={184} $bg="#6aaeff">四、思想建设方面</Topic>
            <Topic $x={678} $y={314} $w={83} $bg="#a8e142">概述</Topic>
            <Topic $x={678} $y={571} $w={185} $bg="#36b48f">一、工作规划方面</Topic>
            <Topic $x={405} $y={790} $w={184} $bg="#fe678f">三、个人修养方面</Topic>
            {NODES.map((n) => (
              <Node key={n.text} $x={n.x} $y={n.y} $bg={n.bg} $side={n.side} $tall={n.tall}>
                {n.mark && <Mark kind={n.mark} />}
                <span>{n.strong && <b>{n.strong}</b>}{n.text}</span>
              </Node>
            ))}

            <Picture>
              <WeekTable width={636} row={27} size={11} />
              <Selection viewBox="0 0 636 109" preserveAspectRatio="none">
                <rect x="0" y="0" width="636" height="109" stroke="#3f9b4c" strokeWidth="1.5" strokeDasharray="4 4" />
                {[[0, 0], [636, 0], [0, 109], [636, 109]].map(([x, y]) => (
                  <rect key={`${x}-${y}`} x={x - 2.5} y={y - 2.5} width="5" height="5" fill="#9cc4e0" stroke="#3d6d8f" />
                ))}
              </Selection>
            </Picture>

            <Dialog role="dialog" aria-label="表格">
              <DialogHead>
                <DialogTitle><AppBadge><Logo size={10} /></AppBadge>表格</DialogTitle>
                <IconButton type="button" aria-label="关闭表格" $w={16}><Icon name="close" size={12} /></IconButton>
              </DialogHead>
              <DialogTools>
                <Cluster>
                  <Cluster $gap={17}>
                    <IconButton type="button" aria-label="上方插入行" $w={20}><Icon name="rowAbove" size={16} /></IconButton>
                    <IconButton type="button" aria-label="下方插入行" $w={20}><Icon name="rowBelow" size={16} /></IconButton>
                    <IconButton type="button" aria-label="删除行" $w={20}><Icon name="rowDelete" size={16} /></IconButton>
                  </Cluster>
                  <Divider $m={11} />
                  <Cluster $gap={16}>
                    <IconButton type="button" aria-label="左侧插入列" $w={20}><Icon name="colLeft" size={16} /></IconButton>
                    <IconButton type="button" aria-label="右侧插入列" $w={20}><Icon name="colRight" size={16} /></IconButton>
                    <IconButton type="button" aria-label="删除列" $w={20}><Icon name="colDelete" size={16} /></IconButton>
                  </Cluster>
                  <Divider $m={10} />
                  <Cluster $gap={17}>
                    <IconButton type="button" aria-label="合并" $w={20} $muted><Icon name="merge" /></IconButton>
                    <IconButton type="button" aria-label="拆分" $w={20} $muted><Icon name="split" /></IconButton>
                  </Cluster>
                  <Divider $m={10} />
                  <Cluster $gap={13}>
                    <IconButton type="button" aria-label="填充" $w={34} $gap={7}><Swatch><Icon name="fill" size={16} /></Swatch><Caret /></IconButton>
                    <IconButton type="button" aria-label="边框颜色" $w={34} $gap={7}><Swatch><Icon name="pen" size={16} /></Swatch><Caret /></IconButton>
                    <IconButton type="button" aria-label="文字颜色" $w={34} $gap={7}><Swatch><Icon name="letterA" size={16} /></Swatch><Caret /></IconButton>
                  </Cluster>
                  <Divider $m={8} />
                  <IconButton type="button" aria-label="加粗" $w={20}><Icon name="letterB" size={16} /></IconButton>
                </Cluster>
                <Confirm type="button">确定</Confirm>
              </DialogTools>
              <SheetArea><WeekTable width={699} row={30} size={12} /></SheetArea>
              <SheetTrack><Thumb $w={496} /></SheetTrack>
            </Dialog>
            <Highlight />
            <Wires>
              <path
                d="M1460 181Q1462 177 1464 181 1470 193 1479 196L1478 201Q1472 200 1468 197L1482 280Q1482 283 1480 283T1477 281L1461 199Q1457 205 1454 213 1451 215 1451 210 1458 196 1460 181Z"
                fill="#fe0000"
              />
            </Wires>
          </Canvas>
          <Track $vertical><Thumb $h={281} /></Track>
          <Track><Thumb $w={1005} /></Track>
          <Track />
        </Workspace>

        <Panel>
          <PanelHead>
            <PanelTitle>图片格式</PanelTitle>
            <IconButton type="button" aria-label="固定"><Icon name="pin" size={12} /></IconButton>
          </PanelHead>
          <PanelBody>
            <SideTabs>
              {["format", "list", "picon", "clover", "calendar", "upload"].map((n) => (
                <SideTab key={n} type="button" aria-label={n} $active={n === "format"}><Icon name={n} /></SideTab>
              ))}
            </SideTabs>
            <Options>
              <FormatRow>
                {["squares", "layout", "branch", "numbering"].map((n) => (
                  <IconButton key={n} type="button" aria-label={n} $gap={9}><Icon name={n} /><Caret /></IconButton>
                ))}
              </FormatRow>
              <Section $gap={27}>
                <SectionTitle>大小：</SectionTitle>
                <SizeRow>
                  <Cluster $gap={5}><Icon name="imgWidth" size={17} /><NumberBox value="700.00" w={80} label="宽度" /></Cluster>
                  <Cluster $gap={5}><Icon name="imgHeight" size={17} /><NumberBox value="120.00" w={80} label="高度" /></Cluster>
                </SizeRow>
                <CheckLabel><Check type="checkbox" defaultChecked />保持长宽比例</CheckLabel>
                <CheckLabel><Check type="checkbox" />此尺寸应用于页面中所有图片</CheckLabel>
              </Section>
              <Section $gap={38} $muted>
                <SectionTitle $muted>位置：</SectionTitle>
                <Indent $x={23}>
                  <IconButton type="button" aria-label="位置" $gap={9} $muted><Icon name="imgFrame" /><Caret /></IconButton>
                </Indent>
              </Section>
              <Section $gap={45}>
                <SectionTitle>替换：</SectionTitle>
                <Indent $x={27}>
                  <IconButton type="button" aria-label="替换"><Icon name="image" /></IconButton>
                </Indent>
              </Section>
            </Options>
          </PanelBody>
        </Panel>
      </Main>

      <StatusBar>
        <Cluster>
          <IconButton type="button" aria-label="页面面板" $w={34}><Icon name="panels" size={17} /></IconButton>
          <Divider $m={6} />
          <Picker $w={99}>
            <PickerSelect aria-label="页面" defaultValue="页面-1"><option>页面-1</option></PickerSelect>
            <Caret large />
          </Picker>
          <Divider $m={0} />
          <IconButton type="button" aria-label="添加页面" $w={41}><Icon name="plus" size={16} /></IconButton>
          <Divider />
          <PageTab type="button">页面-1</PageTab>
          <Divider />
        </Cluster>
        <Cluster>
          <Info>[Image 387]</Info>
          <Cluster $gap={15}>
            <IconButton type="button" aria-label="适应页面" $w={20}><Icon name="fit" size={15} /></IconButton>
            <IconButton type="button" aria-label="全屏显示" $w={20}><Icon name="full" size={16} /></IconButton>
          </Cluster>
          <ZoomGroup>
            <IconButton type="button" aria-label="缩小" $w={18}><Icon name="minus" size={14} /></IconButton>
            <Zoom type="range" aria-label="缩放" defaultValue={20} />
            <IconButton type="button" aria-label="放大" $w={18}><Icon name="plus" size={14} /></IconButton>
          </ZoomGroup>
          <Cluster $gap={15}>
            <Picker $w={39}>
              <PickerSelect aria-label="缩放比例" defaultValue="90%"><option>90%</option></PickerSelect>
              <Caret />
            </Picker>
            <IconButton type="button" aria-label="聚焦" $w={20}><Icon name="focus" size={16} /></IconButton>
            <IconButton type="button" aria-label="适应宽度" $w={20}><Icon name="fitWidth" size={15} /></IconButton>
          </Cluster>
        </Cluster>
      </StatusBar>
      <Watermark>知乎 @悟D</Watermark>
    </Page>
  );
}
